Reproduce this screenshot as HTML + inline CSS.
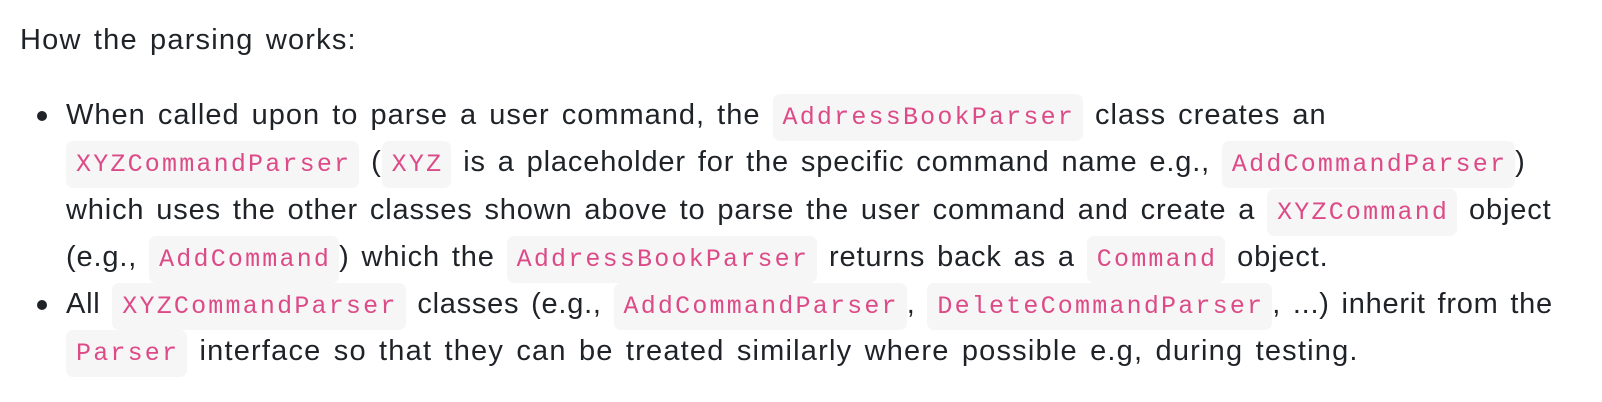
<!DOCTYPE html>
<html><head><meta charset="utf-8"><style>
body{margin:0;width:1602px;height:402px;background:#fff;overflow:hidden;font-family:"Liberation Sans",sans-serif;font-size:29px;letter-spacing:0.85px;word-spacing:3px;color:#1f2328;}
.l{position:absolute;white-space:nowrap;height:47px;line-height:47px;}
code{font-family:"Liberation Mono",monospace;font-size:25px;letter-spacing:2.2px;word-spacing:0;color:#dc4a87;background:#f6f6f6;border-radius:7px;padding:9px 8px 9px 10px;}
.b{position:absolute;left:37px;width:10px;height:10px;border-radius:50%;background:#1f2328;}
</style></head><body>
<div class="l" style="left:20px;top:17px;letter-spacing:1.2px">How the parsing works:</div>
<div class="b" style="top:111px"></div>
<div class="l" style="left:66px;top:92px;letter-spacing:1.0px">When called upon to parse a user command, the <code>AddressBookParser</code> class creates an</div>
<div class="l" style="left:66px;top:139px"><code>XYZCommandParser</code> (<code>XYZ</code> is a placeholder for the specific command name e.g., <code>AddCommandParser</code>)</div>
<div class="l" style="left:66px;top:187px">which uses the other classes shown above to parse the user command and create a <code>XYZCommand</code> object</div>
<div class="l" style="left:66px;top:234px">(e.g., <code>AddCommand</code>) which the <code>AddressBookParser</code> returns back as a <code>Command</code> object.</div>
<div class="b" style="top:300px"></div>
<div class="l" style="left:66px;top:281px;letter-spacing:0.75px">All <code>XYZCommandParser</code> classes (e.g., <code>AddCommandParser</code>, <code>DeleteCommandParser</code>, ...) inherit from the</div>
<div class="l" style="left:66px;top:328px;letter-spacing:1.2px"><code>Parser</code> interface so that they can be treated similarly where possible e.g, during testing.</div>
</body></html>
